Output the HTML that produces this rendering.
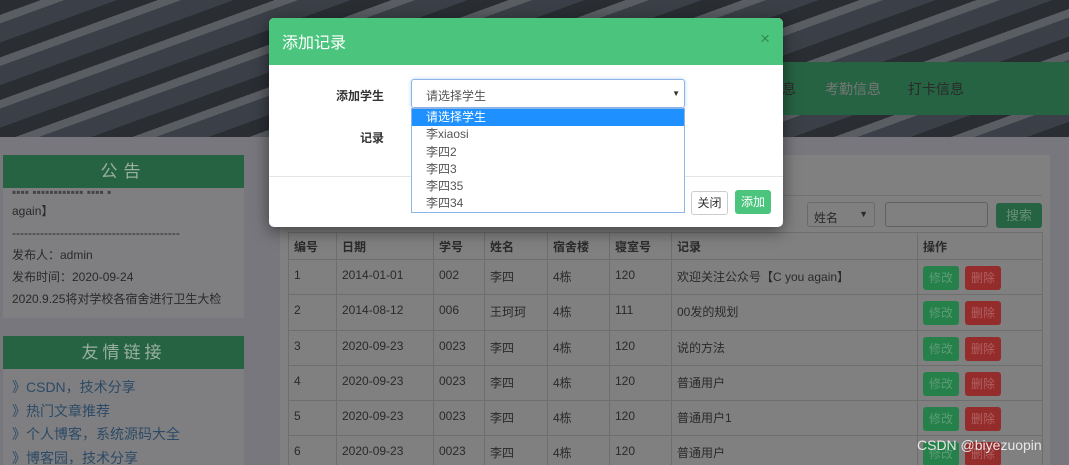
<!DOCTYPE html>
<html><head><meta charset="utf-8"><style>
*{box-sizing:border-box;margin:0;padding:0}
html{width:1069px;height:465px;overflow:hidden}
body{width:1069px;height:465px;overflow:hidden;background:#77777d;font-family:"Liberation Sans","Noto Sans CJK SC",sans-serif;font-size:13px;color:#2a2a2a;position:relative}
.abs{position:absolute}
.hdr{left:0;top:0;width:1069px;height:137px;background:
repeating-linear-gradient(160deg,#2a2e33 0 14px,#5a5d62 14px 22px,#3b4048 22px 40px),linear-gradient(#444,#333)}
.nav{left:700px;top:62px;width:369px;height:53px;background:#266343;color:#2a2a2a;font-size:14px}
.side{left:3px;width:241px;background:#7f7f81}
.gh{background:#266343;color:#9ab0a0;text-align:center}
.panel{left:280px;top:155px;width:770px;height:310px;background:#808080}
table{position:absolute;left:288px;top:232px;border-collapse:collapse;font-size:12px}
td,th{border:1px solid #6e6e6e;padding:0 5px;height:35.3px;vertical-align:top;padding-top:8px;text-align:left;color:#2a2a2a}
th{height:27px;padding-top:5px}
.b{display:inline-block;width:36px;height:24px;border-radius:3px;color:#5c9c78;font-size:12px;text-align:center;line-height:24px;margin-top:-2px}
.g{background:#268049}.r{background:#952c2c;color:#b06060;margin-left:6px}
.modal{left:269px;top:18px;width:514px;height:209px;background:#fff;border-radius:5px;box-shadow:0 4px 16px rgba(0,0,0,.5);overflow:hidden}
.mh{height:47px;background:#4bc47d;color:#fff;font-size:16px;padding:11px 13px}
.opt{height:17.3px;line-height:17px;padding-left:14px;font-size:12px;color:#555}
</style></head><body>
<div class="abs hdr"></div>
<div class="abs nav"><span class="abs" style="left:82px;top:17px">息</span><span class="abs" style="left:125px;top:17px;color:#777">考勤信息</span><span class="abs" style="left:208px;top:17px">打卡信息</span></div>
<div class="abs side" style="top:155px;height:163px">
<div class="gh" style="height:33px;line-height:33px;font-size:17px;letter-spacing:6px">公告</div>
<div style="padding:2px 9px;font-size:12px;line-height:22px">
<div style="height:10px;overflow:hidden;line-height:4px;color:#444">▪▪▪▪ ▪▪▪▪▪▪▪▪▪▪▪▪ ▪▪▪▪ ▪</div>
<div>again】</div><div>------------------------------------------</div>
<div>发布人：admin</div><div>发布时间：2020-09-24</div><div>2020.9.25将对学校各宿舍进行卫生大检</div></div></div>
<div class="abs side" style="top:336px;height:140px">
<div class="gh" style="height:33px;line-height:33px;font-size:17px;letter-spacing:4px">友情链接</div>
<div style="padding:7px 9px;font-size:14px;line-height:23.5px;color:#2c4a66">
<div>》CSDN，技术分享</div><div>》热门文章推荐</div><div>》个人博客，系统源码大全</div><div>》博客园，技术分享</div></div></div>
<div class="abs panel"><div class="abs" style="left:8px;top:40px;width:754px;border-top:1px solid #727272"></div>
<div class="abs" style="left:527px;top:47px;width:68px;height:25px;border:1px solid #6a6a6a;border-radius:3px;padding:6px 6px;font-size:12px">姓名<span style="float:right;font-size:9px">▼</span></div>
<div class="abs" style="left:605px;top:47px;width:103px;height:25px;border:1px solid #606060;border-radius:3px"></div>
<div class="abs" style="left:716px;top:48px;width:46px;height:25px;background:#266343;border-radius:3px;color:#6a9078;text-align:center;line-height:25px">搜索</div></div>
<table>
<tr><th style="width:48px">编号</th><th style="width:97px">日期</th><th style="width:51px">学号</th><th style="width:63px">姓名</th><th style="width:62px">宿舍楼</th><th style="width:62px">寝室号</th><th style="width:246px">记录</th><th style="width:125px">操作</th></tr>
<tr><td>1</td><td>2014-01-01</td><td>002</td><td>李四</td><td>4栋</td><td>120</td><td>欢迎关注公众号【C you again】</td><td><span class="b g">修改</span><span class="b r">删除</span></td></tr>
<tr><td>2</td><td>2014-08-12</td><td>006</td><td>王珂珂</td><td>4栋</td><td>111</td><td>00发的规划</td><td><span class="b g">修改</span><span class="b r">删除</span></td></tr>
<tr><td>3</td><td>2020-09-23</td><td>0023</td><td>李四</td><td>4栋</td><td>120</td><td>说的方法</td><td><span class="b g">修改</span><span class="b r">删除</span></td></tr>
<tr><td>4</td><td>2020-09-23</td><td>0023</td><td>李四</td><td>4栋</td><td>120</td><td>普通用户</td><td><span class="b g">修改</span><span class="b r">删除</span></td></tr>
<tr><td>5</td><td>2020-09-23</td><td>0023</td><td>李四</td><td>4栋</td><td>120</td><td>普通用户1</td><td><span class="b g">修改</span><span class="b r">删除</span></td></tr>
<tr><td>6</td><td>2020-09-23</td><td>0023</td><td>李四</td><td>4栋</td><td>120</td><td>普通用户</td><td><span class="b g">修改</span><span class="b r">删除</span></td></tr>
</table>
<div class="abs" style="left:917px;top:437px;color:#e6e6e6;font-size:14px">CSDN @biyezuopin</div>
<div class="abs modal">
<div class="mh">添加记录<span style="float:right;color:#2e8a55;font-size:17px;margin-top:0">×</span></div>
<div class="abs" style="left:67px;top:69px;font-weight:bold;font-size:12px;color:#333">添加学生</div>
<div class="abs" style="left:91px;top:111px;font-weight:bold;font-size:12px;color:#333">记录</div>
<div class="abs" style="left:142px;top:61px;width:274px;height:29px;border:1px solid #8cb4e6;border-radius:3px;padding:7px 14px;font-size:12px;color:#555;box-shadow:0 0 4px #bcd6f5">请选择学生<span style="float:right;font-size:8px;color:#333;margin-right:-10px;margin-top:2px">▼</span></div>
<div class="abs" style="left:0;top:158px;width:514px;border-top:1px solid #e5e5e5"></div>
<div class="abs" style="left:422px;top:173px;width:37px;height:24px;border:1px solid #ccc;border-radius:3px;font-size:12px;text-align:center;line-height:22px;color:#333">关闭</div>
<div class="abs" style="left:466px;top:172px;width:36px;height:24px;background:#4bc47d;border-radius:3px;font-size:12px;text-align:center;line-height:24px;color:#fff">添加</div>
<div class="abs" style="left:142px;top:90px;width:274px;height:105px;border:1px solid #8cb4e6;background:#fff">
<div class="opt" style="background:#1e90ff;color:#fff">请选择学生</div>
<div class="opt">李xiaosi</div><div class="opt">李四2</div><div class="opt">李四3</div><div class="opt">李四35</div><div class="opt">李四34</div></div>
</div>
</body></html>
